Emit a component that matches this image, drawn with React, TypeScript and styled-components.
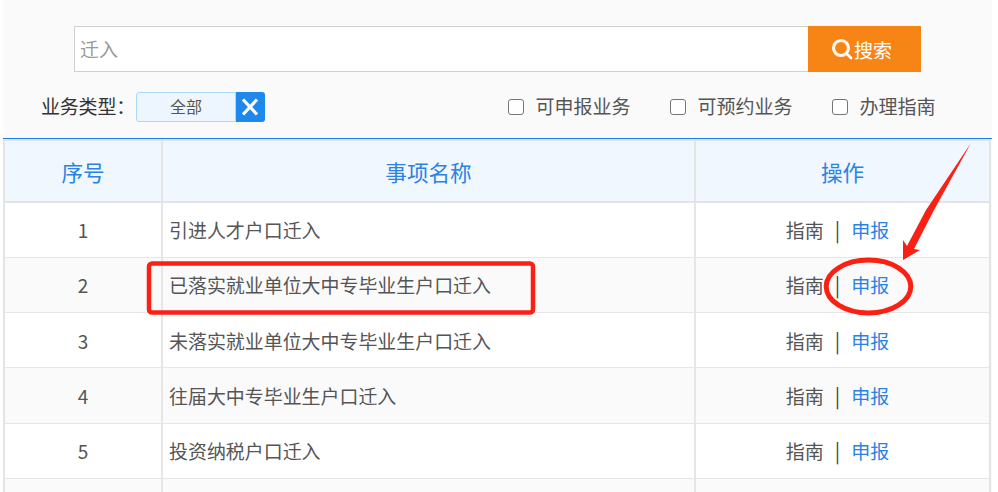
import React from "react";
import styled, { createGlobalStyle } from "styled-components";

const Global = createGlobalStyle`
  html, body { margin: 0; padding: 0; background: #fff; overflow: hidden; }
  body { font-family: "Noto Sans CJK SC", "Noto Sans", sans-serif; }
`;

const Page = styled.div`
  position: relative;
  width: 998px;
  height: 492px;
  overflow: hidden;
  background: #fff;
  padding: 0 6px 0 3px;
  box-sizing: border-box;
`;

const Panel = styled.div`
  background: #fafafa;
  height: 492px;
`;

const SearchRow = styled.div`
  display: flex;
  height: 46px;
  padding: 26px 0 0 71px;
`;

const SearchInput = styled.div`
  width: 734px;
  box-sizing: border-box;
  border: 1px solid #d0d0d0;
  border-right: none;
  background: #fff;
  color: #999;
  font-size: 19px;
  line-height: 44px;
  padding-left: 5px;
`;

const SearchButton = styled.div`
  width: 113px;
  background: #f68516;
  color: #fff;
  font-size: 19px;
  display: flex;
  align-items: center;
  justify-content: center;
  padding-right: 7px;
  box-sizing: border-box;
`;

const FilterRow = styled.div`
  display: flex;
  align-items: center;
  height: 30px;
  margin-top: 20px;
  padding-left: 38px;
`;

const FilterLabel = styled.span`
  color: #333;
  font-size: 19px;
  letter-spacing: -0.2px;
  width: 95px;
  margin-bottom: 3px;
`;

const TypeTag = styled.div`
  width: 100px;
  height: 30px;
  box-sizing: border-box;
  border: 1px solid #a8daf8;
  border-radius: 3px 0 0 3px;
  background: #edf5fe;
  color: #555;
  font-size: 16px;
  padding-bottom: 2px;
  display: flex;
  align-items: center;
  justify-content: center;
`;

const TagClose = styled.div`
  width: 29px;
  height: 30px;
  margin-left: -0.5px;
  background: #1f88ec;
  border-radius: 0 3px 3px 0;
  display: flex;
  align-items: center;
  justify-content: center;
`;

const Checks = styled.div`
  display: flex;
  margin-left: 243px;
  gap: 39px;
`;

const CheckItem = styled.label`
  display: flex;
  align-items: center;
  gap: 12px;
  color: #555;
  font-size: 19px;
`;

const CheckText = styled.span`
  margin-bottom: 3px;
`;

const CheckBox = styled.span`
  width: 16px;
  height: 16px;
  box-sizing: border-box;
  border: 1.5px solid #767676;
  border-radius: 3px;
  background: #fff;
`;

const TableWrap = styled.div`
  margin-top: 16px;
  border-top: 1px solid #1681ea;
`;

const Table = styled.table`
  width: 988px;
  border-collapse: collapse;
  table-layout: fixed;
  border-left: 2px solid #e4e4e4;
  border-right: 2px solid #e4e4e4;
`;

const HeadCell = styled.th`
  height: 62px;
  padding: 0;
  background: #f0f7ff;
  color: #2a82e4;
  font-size: 21.6px;
  font-weight: 400;
  text-align: center;
  border: 2px solid #e4e4e4;
  box-sizing: border-box;
`;

const Row = styled.tr<{ $alt: boolean }>`
  background: ${(p) => (p.$alt ? "#fafafa" : "#fff")};
  height: 55.3px;
`;

const Cell = styled.td`
  padding: 0;
  text-align: center;
  font-size: 19px;
  color: #555;
  border-bottom: 1px solid #e6e6e6;
  border-right: 2px solid #e6e6e6;
`;

const NameCell = styled(Cell)`
  padding-left: 6px;
  text-align: left;
  font-size: 18.95px;
`;

const ActionCell = styled(Cell)`
  padding-right: 10px;
  border-right: none;
`;

const GuideLink = styled.span`
  color: #555;
`;

const Sep = styled.span`
  color: #444;
  margin: 0 11px;
  font-size: 20px;
  font-weight: 400;
`;

const ApplyLink = styled.span`
  color: #2a82e4;
`;

const Annotation = styled.svg`
  position: absolute;
  left: 0;
  top: 0;
  pointer-events: none;
`;

const rows = [
  "引进人才户口迁入",
  "已落实就业单位大中专毕业生户口迁入",
  "未落实就业单位大中专毕业生户口迁入",
  "往届大中专毕业生户口迁入",
  "投资纳税户口迁入",
  "",
];

export default function App() {
  return (
    <Page>
      <Global />
      <Panel>
        <SearchRow>
          <SearchInput>迁入</SearchInput>
          <SearchButton>
            <svg width="24" height="24" viewBox="0 0 24 24" fill="none" stroke="#fff">
              <circle cx="11" cy="11" r="7.5" strokeWidth="3.2" opacity="0.92" />
              <path d="M16.5 16.5L21 21" strokeWidth="2.6" strokeLinecap="round" />
            </svg>
            <span>搜索</span>
          </SearchButton>
        </SearchRow>
        <FilterRow>
          <FilterLabel>业务类型：</FilterLabel>
          <TypeTag>全部</TypeTag>
          <TagClose>
            <svg width="20" height="20" viewBox="0 0 20 20" stroke="#fff" strokeWidth="3.2" fill="none">
              <path d="M3 2.5L17 17.5M17 2.5L3 17.5" />
            </svg>
          </TagClose>
          <Checks>
            {["可申报业务", "可预约业务", "办理指南"].map((t) => (
              <CheckItem key={t}>
                <CheckBox />
                <CheckText>{t}</CheckText>
              </CheckItem>
            ))}
          </Checks>
        </FilterRow>
        <TableWrap>
          <Table>
            <colgroup>
              <col style={{ width: 158 }} />
              <col style={{ width: 533 }} />
              <col />
            </colgroup>
            <thead>
              <tr>
                <HeadCell>序号</HeadCell>
                <HeadCell>事项名称</HeadCell>
                <HeadCell>操作</HeadCell>
              </tr>
            </thead>
            <tbody>
              {rows.map((name, i) => (
                <Row key={i} $alt={i % 2 === 1}>
                  <Cell>{name ? i + 1 : ""}</Cell>
                  <NameCell>{name}</NameCell>
                  <ActionCell>
                    {name && (
                      <>
                        <GuideLink>指南</GuideLink>
                        <Sep>|</Sep>
                        <ApplyLink>申报</ApplyLink>
                      </>
                    )}
                  </ActionCell>
                </Row>
              ))}
            </tbody>
          </Table>
        </TableWrap>
      </Panel>
      <Annotation width="998" height="492" viewBox="0 0 998 492">
        <rect x="149" y="263.5" width="384" height="49" rx="3" fill="none" stroke="#fb2014" strokeWidth="4.5" />
        <ellipse cx="868.5" cy="286.5" rx="42.3" ry="26.5" fill="none" stroke="#fb2014" strokeWidth="5" />
        <path d="M971 143L934 210L914 249L920 250L903 260L903 240L907 246L926 210Z" fill="#fb2014" />
      </Annotation>
    </Page>
  );
}
